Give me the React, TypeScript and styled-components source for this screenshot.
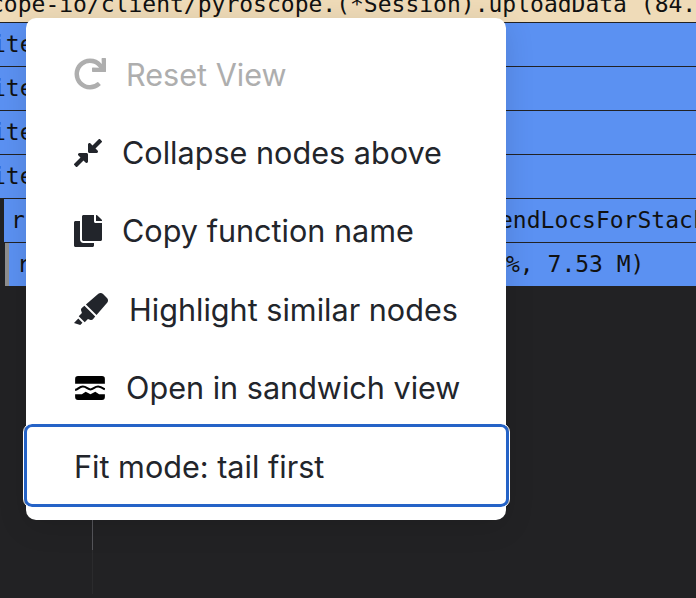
import React from 'react';
import styled, { createGlobalStyle } from 'styled-components';
import { FaRedo, FaCompressAlt, FaCopy, FaHighlighter } from 'react-icons/fa';

const Global = createGlobalStyle`
  html, body { margin: 0; padding: 0; background: #222224; }
  #root { width: 696px; height: 598px; overflow: hidden; }
`;

const Page = styled.div`
  position: relative;
  width: 696px;
  height: 598px;
  background: #222224;
  overflow: hidden;
  font-family: "DejaVu Sans Mono", "Liberation Mono", monospace;
  font-size: 23px;
  color: #111;
`;

const TopBar = styled.div`
  height: 22px;
  background: #efdbb8;
  line-height: 16px;
  white-space: nowrap;
  overflow: hidden;
`;

const TopText = styled.div`
  margin: -4px 0 0 -10px;
`;

const Row = styled.div<{ $inset: number; $stub?: string }>`
  height: 43px;
  margin-top: 1px;
  margin-left: ${(p) => p.$inset}px;
  background: #5b91f2;
  border-left: ${(p) => (p.$stub ? `4px solid ${p.$stub}` : 'none')};
  white-space: nowrap;
  overflow: hidden;
  line-height: 43px;
  position: relative;
`;

const RowLabel = styled.span<{ $x: number }>`
  margin-left: ${(p) => p.$x}px;
`;

const Rest = styled.span<{ $x: number }>`
  position: absolute;
  left: ${(p) => p.$x}px;
  top: 0;
`;

const Guide = styled.div`
  position: absolute;
  left: 92px;
  top: 520px;
  width: 1px;
  height: 74px;
  background: linear-gradient(#55555a 0 30px, #2b2b2d 30px);
`;

const Menu = styled.div`
  position: absolute;
  left: 26px;
  top: 18px;
  width: 480px;
  height: 502px;
  box-sizing: border-box;
  padding: 17px 0 14px;
  background: #fff;
  border-radius: 10px;
  box-shadow: 0 6px 30px rgba(0, 0, 0, 0.12);
  font-family: Inter, "Liberation Sans", sans-serif;
  font-size: 30.6px;
  color: #22252b;
`;

const Item = styled.div<{ $disabled?: boolean; $focus?: boolean; $gap: number }>`
  height: 78.4px;
  box-sizing: border-box;
  display: flex;
  align-items: center;
  padding-left: 48px;
  gap: ${(p) => p.$gap}px;
  color: ${(p) => (p.$disabled ? '#aeaeae' : 'inherit')};
  white-space: nowrap;
  ${(p) =>
    p.$focus
      ? `
    position: relative;
    margin: 0 -2px;
    padding-left: 50px;
  `
      : ''}
`;

const FocusRing = styled.span`
  position: absolute;
  inset: -3px -0.5px -1.500px 0;
  border: 3.5px solid #2563c7;
  border-radius: 8px;
  outline: 1.5px solid #fff;
`;

const RedoIcon = styled(FaRedo)`
  width: 32px;
  height: 32px;
  flex: none;
  color: #aeaeae;
  margin-right: -1px;
`;

const CompressIcon = styled(FaCompressAlt)`
  width: 28px;
  height: 32px;
  flex: none;
`;

const CopyIcon = styled(FaCopy)`
  width: 28px;
  height: 32px;
  flex: none;
`;

const HighlightIcon = styled(FaHighlighter)`
  width: 34px;
  height: 32px;
  flex: none;
`;

const SandwichSvg = styled.svg`
  width: 30px;
  height: 24px;
  flex: none;
  margin-left: 1px;
`;

const Sandwich = () => (
  <SandwichSvg viewBox="0 0 31 25" aria-hidden="true">
    <path d="M3 0h25a3 3 0 0 1 3 3v5H0V3a3 3 0 0 1 3-3z" fill="#000" />
    <path d="M0 19h7l4-2.5 5 2.5 5-2.5 4 2.5h6v3a3 3 0 0 1-3 3H3a3 3 0 0 1-3-3z" fill="#000" />
    <path d="M0 14.500c3 0 4-3.500 8-3.500s5 3 8 3 4-3 8-3c2.500 0 4 1 7 3" fill="none" stroke="#000" strokeWidth="2.200" />
  </SandwichSvg>
);

export default function App() {
  return (
    <Page>
      <Global />
      <TopBar>
        <TopText>cope-io/client/pyroscope.(*Session).uploadData (84.</TopText>
      </TopBar>
      <Row $inset={0}><RowLabel $x={-8}>ite</RowLabel></Row>
      <Row $inset={0}><RowLabel $x={-8}>ite</RowLabel></Row>
      <Row $inset={0}><RowLabel $x={-8}>ite</RowLabel></Row>
      <Row $inset={0}><RowLabel $x={-8}>ite</RowLabel></Row>
      <Row $inset={4}>
        <RowLabel $x={7}>r</RowLabel>
        <Rest $x={495}>endLocsForStack</Rest>
      </Row>
      <Row $inset={5} $stub="#8e8e8e">
        <RowLabel $x={8}>r</RowLabel>
        <Rest $x={497}>%, 7.53 M)</Rest>
      </Row>
      <Guide />
      <Menu>
        <Item $disabled $gap={21}>
          <RedoIcon />
          Reset View
        </Item>
        <Item $gap={20}>
          <CompressIcon />
          Collapse nodes above
        </Item>
        <Item $gap={20}>
          <CopyIcon />
          Copy function name
        </Item>
        <Item $gap={21}>
          <HighlightIcon />
          Highlight similar nodes
        </Item>
        <Item $gap={21}>
          <Sandwich />
          Open in sandwich view
        </Item>
        <Item $focus $gap={0}>
          <FocusRing />
          Fit mode: tail first
        </Item>
      </Menu>
    </Page>
  );
}
